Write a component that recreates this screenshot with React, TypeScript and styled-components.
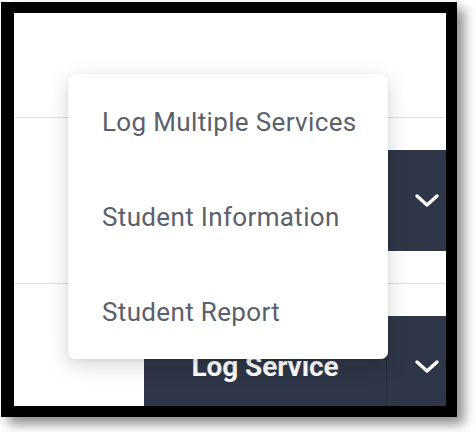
import React from "react";
import styled, { createGlobalStyle } from "styled-components";

const GlobalStyle = createGlobalStyle`
  html, body { margin: 0; padding: 0; background: #ffffff; }
  body { font-family: Roboto, "Liberation Sans", sans-serif; }
  * { box-sizing: border-box; }
`;

const Page = styled.div`
  width: 476px;
  height: 432px;
  padding: 2px 0 0 1px;
  background: #ffffff;
`;

const Frame = styled.div`
  position: relative;
  width: 456px;
  height: 415px;
  border-style: solid;
  border-color: #000000;
  border-width: 11px 11px 11px 13px;
  box-shadow: 7px 7px 11px rgba(0, 0, 0, 0.45);
  background: #ffffff;
  overflow: hidden;
  display: flex;
  flex-direction: column;
`;

const TopArea = styled.div`
  height: 105px;
  flex: none;
  border-bottom: 1px solid #dedfe2;
`;

const Row = styled.div`
  flex: none;
  display: flex;
  padding: 32px 0 32px 130px;
  border-bottom: 1px solid #dedfe2;
`;

const SplitButton = styled.div`
  display: flex;
  flex: none;
  height: 101px;
  background: #2f3647;
`;

const MainButton = styled.div`
  width: 243px;
  display: flex;
  align-items: center;
  justify-content: center;
  color: #ffffff;
  font-family: Roboto, "Liberation Sans", sans-serif;
  font-weight: 700;
  font-size: 28px;
  letter-spacing: -0.1px;
  border-right: 1px solid #262c3a;
`;

const Toggle = styled.div`
  width: 80px;
  display: flex;
  align-items: center;
  justify-content: center;
`;

const Menu = styled.div`
  position: absolute;
  left: 54px;
  top: 61px;
  width: 320px;
  height: 285px;
  background: #ffffff;
  border-radius: 7px;
  box-shadow: 0 6px 22px rgba(0, 0, 0, 0.16), 0 1px 4px rgba(0, 0, 0, 0.06);
  display: flex;
  flex-direction: column;
`;

const MenuItem = styled.div`
  height: 95px;
  display: flex;
  align-items: center;
  padding-left: 34px;
  color: #5b606b;
  font-family: Roboto, "Liberation Sans", sans-serif;
  font-size: 26px;
  letter-spacing: 0.35px;
`;

const Chevron = () => (
  <svg width="26" height="16" viewBox="0 0 26 16" fill="none">
    <polyline
      points="3,3 13,12 23,3"
      stroke="#ffffff"
      strokeWidth="3.4"
      strokeLinecap="round"
      strokeLinejoin="round"
    />
  </svg>
);

export default function App() {
  return (
    <>
      <GlobalStyle />
      <Page>
        <Frame>
          <TopArea />
          <Row>
            <SplitButton>
              <MainButton />
              <Toggle>
                <Chevron />
              </Toggle>
            </SplitButton>
          </Row>
          <Row>
            <SplitButton>
              <MainButton>Log Service</MainButton>
              <Toggle>
                <Chevron />
              </Toggle>
            </SplitButton>
          </Row>
          <Menu>
            <MenuItem>Log Multiple Services</MenuItem>
            <MenuItem>Student Information</MenuItem>
            <MenuItem>Student Report</MenuItem>
          </Menu>
        </Frame>
      </Page>
    </>
  );
}
